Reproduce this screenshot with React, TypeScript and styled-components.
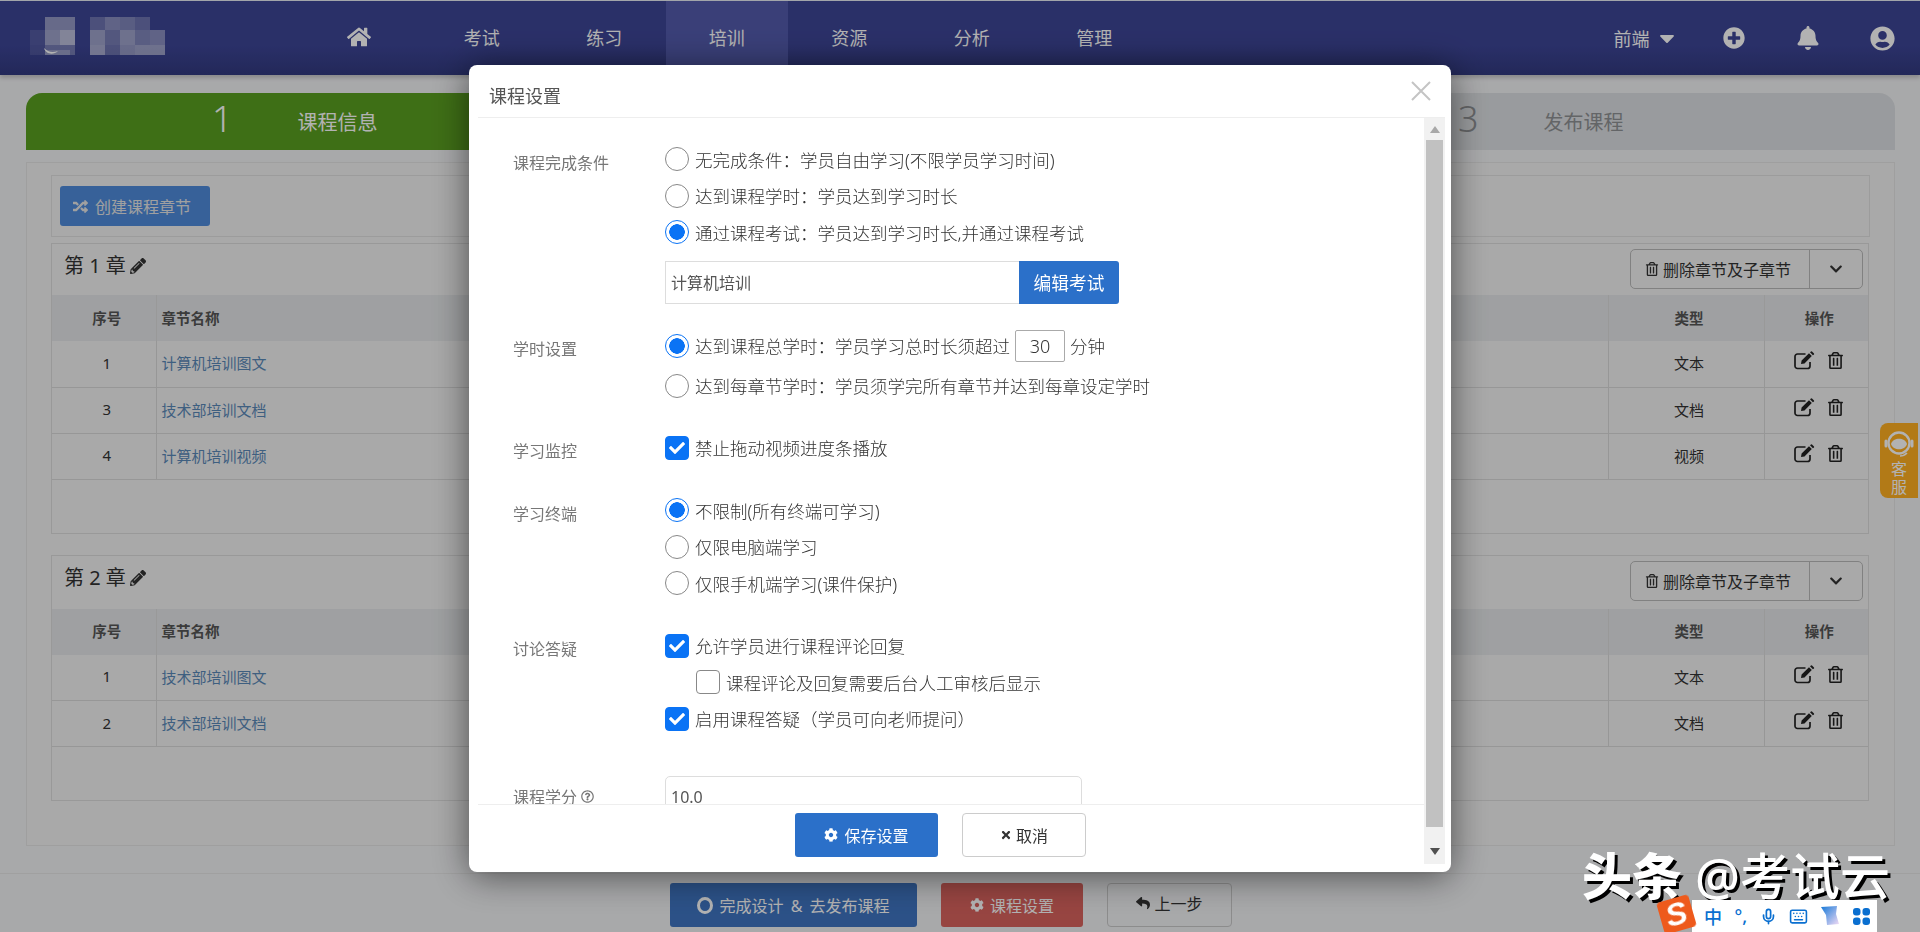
import React from 'react';
import styled, {createGlobalStyle} from "styled-components";
import {
    FaBell, FaCaretDown, FaCheck, FaChevronDown, FaCog, FaHome, FaPencilAlt, FaPlusCircle,
    FaRandom, FaRegQuestionCircle, FaRegTrashAlt, FaReply, FaTimes, FaUserCircle
} from "react-icons/fa";
import {Keyboard, Mic} from "lucide-react";

const GlobalStyle = createGlobalStyle`
    html, body {
        margin: 0;
        height: 932px;
        overflow: hidden;
        background: #f1f2f4;
        font-family: "Noto Sans", "Noto Sans CJK SC", sans-serif;
        color: #333;
    }
    * {
        box-sizing: border-box;
    }
`

const mosaic = [
    [15, 0, 30, 13, .45], [60, 0, 15, 13, .25], [75, 0, 15, 13, .4], [90, 0, 15, 13, .35], [105, 0, 15, 13, .25],
    [0, 13, 15, 15, .12], [15, 13, 15, 15, .5], [30, 13, 15, 15, .65], [60, 13, 15, 15, .5], [75, 13, 15, 15, .3], [90, 13, 15, 15, .5], [105, 13, 15, 15, .35], [120, 13, 15, 15, .4],
    [0, 28, 15, 10, .1], [15, 28, 30, 10, .3], [60, 28, 15, 10, .55], [75, 28, 15, 10, .25], [90, 28, 15, 10, .45], [105, 28, 30, 10, .5],
    [15, 33, 25, 5, .25], [60, 38, 75, 3, .05],
];

const Logo = () => (
    <svg width="135" height="38" viewBox="0 0 135 38" fill="none">
        {mosaic.map(([x, y, w, h, o], i) => (
            <rect key={i} x={x} y={y} width={w} height={h} fill="#fff" opacity={o}/>
        ))}
        <path d="M14 31 C16 38 24 38 28 34 C22 36 18 35 14 31Z" fill="#fff"/>
    </svg>
);

const EditIcon = () => (
    <svg width="21" height="19" viewBox="0 0 21 19" fill="none">
        <path d="M16 11 V15 A2.5 2.5 0 0 1 13.5 17.5 H3.5 A2.5 2.5 0 0 1 1 15 V5.500 A2.5 2.5 0 0 1 3.500 3 H11.500"
              stroke="currentColor" strokeWidth="1.7"/>
        <path d="M7 13 L7.600 9.500 L15 2.200 L17.800 5 L10.500 12.400Z M16 1.200 L17 .4 Q17.500 0 18 .4 L20 2.500 Q20.300 3 20 3.400 L18.900 4.200Z"
              fill="currentColor"/>
    </svg>
);

const navItems = ["考试", "练习", "培训", "资源", "分析", "管理"];

const Nav = () => (
    <NavBar>
        <LogoBox><Logo/></LogoBox>
        <NavItem><FaHome size={24}/></NavItem>
        {navItems.map(item => (
            <NavItem key={item} $active={item === "培训"}>{item}</NavItem>
        ))}
        <NavRight>
            <NavUser>前端<FaCaretDown size={24}/></NavUser>
            <NavIcon $gap={42.5}><FaPlusCircle size={22}/></NavIcon>
            <NavIcon><FaBell size={24}/></NavIcon>
            <NavIcon><FaUserCircle size={25}/></NavIcon>
        </NavRight>
    </NavBar>
);

const Steps = () => (
    <StepBar>
        <Step $bg="#5a9f20" $color="#fff"><StepNum>1</StepNum><StepText>课程信息</StepText><span/></Step>
        <Step $bg="#dcdfe2" $color="#8f9194"><StepNum>2</StepNum><StepText>课程内容</StepText><span/></Step>
        <Step $bg="#dcdfe2" $color="#8f9194"><StepNum>3</StepNum><StepText>发布课程</StepText><span/></Step>
    </StepBar>
);

type Row = { no: number; name: string; type: string };

const Chapter = ({no, rows, headH}: { no: number; rows: Row[]; headH: number }) => (
    <ChapterBox>
        <ChapterHead $h={headH}>
            <ChapterTitle>第 {no} 章<FaPencilAlt size={16}/></ChapterTitle>
            <DeleteGroup>
                <DeleteMain><FaRegTrashAlt size={14}/>删除章节及子章节</DeleteMain>
                <DeleteArrow><FaChevronDown size={14}/></DeleteArrow>
            </DeleteGroup>
        </ChapterHead>
        <Table>
            <colgroup>
                <col width="104"/>
                <col/>
                <col width="156"/>
                <col width="104"/>
            </colgroup>
            <thead>
            <tr>
                <HeadCell $center>序号</HeadCell>
                <HeadCell>章节名称</HeadCell>
                <HeadCell $center>类型</HeadCell>
                <HeadCell $center>操作</HeadCell>
            </tr>
            </thead>
            <tbody>
            {rows.map(r => (
                <tr key={r.no}>
                    <Cell $center>{r.no}</Cell>
                    <Cell><RowLink>{r.name}</RowLink></Cell>
                    <Cell $center>{r.type}</Cell>
                    <Cell $center>
                        <RowIcons><EditIcon/><FaRegTrashAlt size={17}/></RowIcons>
                    </Cell>
                </tr>
            ))}
            </tbody>
        </Table>
    </ChapterBox>
);

const Radio = ({checked, children}: { checked?: boolean; children: React.ReactNode }) => (
    <Line>
        <RadioMark $checked={checked}/>
        {children}
    </Line>
);

const Check = ({checked, indent, children}: { checked?: boolean; indent?: boolean; children: React.ReactNode }) => (
    <Line $indent={indent}>
        <CheckMark $checked={checked}>{checked && <FaCheck size={16}/>}</CheckMark>
        {children}
    </Line>
);

const SettingsDialog = () => (
    <Dialog>
        <DialogHead>
            <DialogTitle>课程设置</DialogTitle>
            <svg width="20" height="20" viewBox="0 0 20 20">
                <path d="M1 1 L19 19 M19 1 L1 19" stroke="#c4c4c4" strokeWidth="2"/>
            </svg>
        </DialogHead>
        <DialogMain>
            <DialogColumn>
                <DialogBody>
                    <Section $top={23}>
                        <SectionLabel>课程完成条件</SectionLabel>
                        <div>
                            <Radio>无完成条件：学员自由学习(不限学员学习时间)</Radio>
                            <Radio>达到课程学时：学员达到学习时长</Radio>
                            <Radio checked>通过课程考试：学员达到学习时长,并通过课程考试</Radio>
                            <ExamRow>
                                <ExamInput>计算机培训</ExamInput>
                                <ExamButton>编辑考试</ExamButton>
                            </ExamRow>
                        </div>
                    </Section>
                    <Section $top={24}>
                        <SectionLabel>学时设置</SectionLabel>
                        <div>
                            <Radio checked>达到课程总学时：学员学习总时长须超过<MinuteBox>30</MinuteBox>分钟</Radio>
                            <LineGap/>
                            <Radio>达到每章节学时：学员须学完所有章节并达到每章设定学时</Radio>
                        </div>
                    </Section>
                    <Section $top={25.5}>
                        <SectionLabel>学习监控</SectionLabel>
                        <div>
                            <Check checked>禁止拖动视频进度条播放</Check>
                        </div>
                    </Section>
                    <Section $top={26}>
                        <SectionLabel>学习终端</SectionLabel>
                        <div>
                            <Radio checked>不限制(所有终端可学习)</Radio>
                            <Radio>仅限电脑端学习</Radio>
                            <Radio>仅限手机端学习(课件保护)</Radio>
                        </div>
                    </Section>
                    <Section $top={26}>
                        <SectionLabel>讨论答疑</SectionLabel>
                        <div>
                            <Check checked>允许学员进行课程评论回复</Check>
                            <Check indent>课程评论及回复需要后台人工审核后显示</Check>
                            <Check checked>启用课程答疑（学员可向老师提问）</Check>
                        </div>
                    </Section>
                    <Section $top={38.5}>
                        <SectionLabel>课程学分 <FaRegQuestionCircle size={13}/></SectionLabel>
                        <CreditInput>10.0</CreditInput>
                    </Section>
                </DialogBody>
                <DialogFoot>
                    <FootButton $bg="#2b70c9" $color="#fff"><FaCog size={14}/>保存设置</FootButton>
                    <CancelButton><FaTimes size={12}/>取消</CancelButton>
                </DialogFoot>
            </DialogColumn>
            <Scrollbar>
                <ScrollArrow $up/>
                <ScrollThumb/>
                <ScrollRest><ScrollArrow/></ScrollRest>
            </Scrollbar>
        </DialogMain>
    </Dialog>
);

const InputBar = () => (
    <ImeBar>
        <ImeLogo><span>S</span></ImeLogo>
        <ImeText>中</ImeText>
        <ImeText>°,</ImeText>
        <Mic size={17} strokeWidth={2.4}/>
        <Keyboard size={19} strokeWidth={2}/>
        <svg width="20" height="24" viewBox="0 0 20 24">
            <defs>
                <linearGradient id="imeSkin" x1="0" y1="0" x2="1" y2="1">
                    <stop offset="0" stopColor="#1478d8"/>
                    <stop offset="1" stopColor="#f4dcf5"/>
                </linearGradient>
            </defs>
            <path d="M1 3 L17 2 L16 10 L19 20 L7 21 L6 11Z" fill="url(#imeSkin)"/>
        </svg>
        <svg width="17" height="17" viewBox="0 0 17 17" fill="#0a6fd0">
            <rect x="0" y="0" width="7.5" height="7.5" rx="3"/>
            <rect x="9.5" y="0" width="7.5" height="7.5" rx="3"/>
            <rect x="0" y="9.5" width="7.5" height="7.5" rx="3"/>
            <rect x="9.5" y="9.5" width="7.5" height="7.5" rx="3"/>
        </svg>
    </ImeBar>
);

export default function App() {
    return (
        <>
            <GlobalStyle/>
            <Page>
                <Nav/>
                <Steps/>
                <Panel>
                    <Toolbar><CreateButton><FaRandom size={15}/>创建课程章节</CreateButton></Toolbar>
                    <Chapter no={1} headH={51} rows={[
                        {no: 1, name: "计算机培训图文", type: "文本"},
                        {no: 3, name: "技术部培训文档", type: "文档"},
                        {no: 4, name: "计算机培训视频", type: "视频"},
                    ]}/>
                    <ChapterGap/>
                    <Chapter no={2} headH={53} rows={[
                        {no: 1, name: "技术部培训图文", type: "文本"},
                        {no: 2, name: "技术部培训文档", type: "文档"},
                    ]}/>
                </Panel>
                <BottomBar>
                    <FootButton $bg="#3f75c2" $color="#fff" $w={247}><RingIcon/>完成设计 &amp; 去发布课程</FootButton>
                    <FootButton $bg="#d9635e" $color="#fff" $w={142}><FaCog size={14}/>课程设置</FootButton>
                    <BackButton><FaReply size={14}/>上一步</BackButton>
                </BottomBar>
                <ServiceTab>
                    <svg width="32" height="32" viewBox="0 0 32 32" fill="none">
                        <circle cx="16" cy="15" r="10.5" stroke="#fff" strokeWidth="2.4"/>
                        <path d="M8 16 C10 9 22 9 24 16 C22 23 10 23 8 16Z" fill="#fff"/>
                        <path d="M3 13 V18 M29 13 V18" stroke="#fff" strokeWidth="3" strokeLinecap="round"/>
                        <path d="M24 25 C22 27 20 28 17 28" stroke="#fff" strokeWidth="1.6"/>
                    </svg>
                    <span>客</span>
                    <span>服</span>
                </ServiceTab>
            </Page>
            <Backdrop/>
            <SettingsDialog/>
            <Watermark><b>头条</b> @考试云</Watermark>
            <InputBar/>
        </>
    );
}

const Page = styled.div`
    position: relative;
    height: 932px;
    overflow: hidden;
`
const Backdrop = styled.div`
    position: fixed;
    inset: 0;
    z-index: 10;
    background: rgba(0, 0, 0, .3);
`
const NavBar = styled.nav`
    display: flex;
    align-items: stretch;
    height: 75px;
    border-top: 1px solid #e8ecf4;
    background: linear-gradient(#3d4596 60%, #323a80);
    box-shadow: 0 3px 4px rgba(0, 0, 0, .18);
`
const LogoBox = styled.div`
    width: 298px;
    padding: 16px 0 0 30px;
`
const NavItem = styled.a<{ $active?: boolean }>`
    display: flex;
    align-items: center;
    justify-content: center;
    width: 122.5px;
    padding-bottom: 2px;
    font-size: 18px;
    color: #fff;
    background: ${props => props.$active ? "#535bad" : "transparent"};
`
const NavRight = styled.div`
    display: flex;
    align-items: center;
    margin-left: auto;
    padding-right: 25px;
    color: #fff;
`
const NavUser = styled.span`
    display: flex;
    align-items: center;
    gap: 5px;
    font-size: 18px;
`
const NavIcon = styled.span<{ $gap?: number }>`
    display: flex;
    justify-content: center;
    width: 25px;
    margin-left: ${props => props.$gap ?? 49.5}px;
`
const StepBar = styled.div`
    display: flex;
    height: 57px;
    margin: 18px 25px 0 26px;
    border-radius: 16px 16px 0 0;
    overflow: hidden;
`
const Step = styled.div<{ $bg: string; $color: string }>`
    display: grid;
    flex: 1;
    grid-template-columns: 1fr auto 1fr;
    align-items: center;
    background: ${props => props.$bg};
    color: ${props => props.$color};
`
const StepNum = styled.span`
    justify-self: end;
    margin: 0 65px 6px 0;
    font-size: 36px;
    font-weight: 300;
`
const StepText = styled.span`
    font-size: 20px;
`
const Panel = styled.div`
    margin: 12px 25px 0 26px;
    height: 684px;
    padding: 12px 24px 0;
    border: 1px solid #e4e4e4;
    background: #f2f2f2;
`
const Toolbar = styled.div`
    height: 62px;
    padding: 10px 8px;
    border: 1px solid #e0e0e0;
`
const CreateButton = styled.button`
    display: flex;
    align-items: center;
    gap: 7px;
    height: 40px;
    width: 150px;
    padding: 0 0 0 13px;
    border: 0;
    border-radius: 3px;
    background: #4f8cdc;
    color: #e6e6e6;
    font: 16px "Noto Sans", "Noto Sans CJK SC", sans-serif;
`
const ChapterBox = styled.section`
    margin-top: 6px;
    width: 1818px;
    padding-bottom: 53px;
    border: 1px solid #dcdcdc;
`
const ChapterGap = styled.div`
    height: 15px;
`
const ChapterHead = styled.header<{ $h: number }>`
    display: flex;
    align-items: flex-start;
    justify-content: space-between;
    height: ${props => props.$h}px;
    padding: 5px 5px 0 12px;
`
const ChapterTitle = styled.h3`
    display: flex;
    align-items: center;
    gap: 4px;
    margin: 0;
    font-size: 20px;
    font-weight: 400;
    line-height: 34px;
`
const DeleteGroup = styled.div`
    display: flex;
    height: 40px;
    border: 1px solid #b9b9b9;
    border-radius: 5px;
`
const DeleteMain = styled.span`
    display: flex;
    align-items: center;
    gap: 4px;
    width: 179px;
    padding-left: 14px;
    font-size: 16px;
    white-space: nowrap;
    border-right: 1px solid #b9b9b9;
`
const DeleteArrow = styled.span`
    display: flex;
    align-items: center;
    justify-content: center;
    width: 52px;
`
const Table = styled.table`
    width: 100%;
    table-layout: fixed;
    border-collapse: collapse;
`
const HeadCell = styled.th<{ $center?: boolean }>`
    height: 46px;
    padding: 0 0 2px ${props => props.$center ? 6 : 5}px;
    border-left: 1px solid #dcdcdc;
    background: #e4e6e8;
    font-size: 14.5px;
    font-weight: 700;
    color: #555;
    text-align: ${props => props.$center ? "center" : "left"};

    &:first-child {
        border-left: 0;
    }
`
const Cell = styled.td<{ $center?: boolean }>`
    height: 46px;
    padding: 0 0 2px ${props => props.$center ? 6 : 5}px;
    border-left: 1px solid #d8d8d8;
    border-bottom: 1px solid #d8d8d8;
    font-size: 15px;
    text-align: ${props => props.$center ? "center" : "left"};

    &:first-child {
        border-left: 0;
    }
`
const RowLink = styled.a`
    color: #5a88b8;
`
const RowIcons = styled.span`
    display: inline-flex;
    align-items: center;
    gap: 12px;
    margin-bottom: 4px;
    color: #222;
    vertical-align: middle;
`
const BottomBar = styled.footer`
    display: flex;
    justify-content: center;
    gap: 24px;
    height: 59px;
    margin-top: 27px;
    padding: 9px 18px 0 0;
    border-top: 1px solid #e6e6e6;
`
const FootButton = styled.button<{ $bg: string; $color: string; $w?: number }>`
    display: flex;
    align-items: center;
    justify-content: center;
    gap: 6px;
    width: ${props => props.$w ?? 143}px;
    height: 44px;
    padding: 0;
    border: 0;
    border-radius: 3px;
    background: ${props => props.$bg};
    color: ${props => props.$color};
    font: 16px "Noto Sans", "Noto Sans CJK SC", sans-serif;
    word-spacing: 3px;
`
const CancelButton = styled.button`
    display: flex;
    align-items: center;
    justify-content: center;
    gap: 4px;
    width: 124px;
    height: 44px;
    padding: 0;
    border: 1px solid #ccc;
    border-radius: 4px;
    background: #fff;
    color: #333;
    font: 16px "Noto Sans", "Noto Sans CJK SC", sans-serif;
`
const BackButton = styled(CancelButton)`
    width: 125px;
    border-color: #c9c9c9;
    background: transparent;
    padding-bottom: 5px;
`
const RingIcon = styled.span`
    width: 16px;
    height: 17px;
    border: 3px solid #fff;
    border-radius: 50%;
`
const ServiceTab = styled.aside`
    position: absolute;
    top: 423px;
    right: 2px;
    display: flex;
    flex-direction: column;
    align-items: center;
    width: 38px;
    height: 75px;
    padding-top: 5px;
    border-radius: 8px 0 0 8px;
    background: #ffaf22;
    color: #fff;
    font-size: 16px;
    line-height: 18px;
`
const Dialog = styled.div`
    position: fixed;
    top: 65px;
    left: 469px;
    z-index: 11;
    width: 982px;
    height: 807px;
    padding: 0 6px 0 9px;
    border-radius: 8px;
    background: #fff;
    box-shadow: 0 4px 36px rgba(0, 0, 0, .55);
`
const DialogHead = styled.header`
    display: flex;
    align-items: center;
    justify-content: space-between;
    height: 53px;
    padding: 0 14px 0 11px;
    border-bottom: 1px solid #eee;
`
const DialogTitle = styled.h4`
    margin: 8px 0 0;
    font-size: 18px;
    font-weight: 400;
    color: #555;
`
const DialogMain = styled.div`
    display: flex;
    height: 746px;
`
const DialogColumn = styled.div`
    display: flex;
    flex: 1;
    flex-direction: column;
    height: 754px;
    min-width: 0;
`
const DialogBody = styled.div`
    height: 686px;
    padding-left: 35px;
    overflow: hidden;
`
const Section = styled.div<{ $top: number }>`
    display: grid;
    grid-template-columns: 152px 1fr;
    margin-top: ${props => props.$top}px;
`
const SectionLabel = styled.label`
    display: flex;
    align-items: center;
    gap: 4px;
    align-self: start;
    height: 36.5px;
    margin: 2.5px 0 -2.5px;
    font-size: 16px;
    color: #777;
`
const Line = styled.div<{ $indent?: boolean }>`
    display: flex;
    align-items: center;
    height: 36.5px;
    padding-left: ${props => props.$indent ? 31 : 0}px;
    font-size: 17.5px;
    font-weight: 300;
    color: #333;
`
const LineGap = styled.div`
    height: 3.5px;
`
const RadioMark = styled.span<{ $checked?: boolean }>`
    flex: none;
    width: 24px;
    height: 24px;
    margin-right: 6px;
    border: 1.5px solid ${props => props.$checked ? "#0a73f5" : "#888"};
    border-radius: 50%;
    background: ${props => props.$checked ? "radial-gradient(circle, #0a73f5 0 7.5px, #fff 8px)" : "#fff"};
`
const CheckMark = styled.span<{ $checked?: boolean }>`
    display: flex;
    flex: none;
    align-items: center;
    justify-content: center;
    width: 24px;
    height: 24px;
    margin-right: 6px;
    border: 1.5px solid ${props => props.$checked ? "#0a73f5" : "#888"};
    border-radius: 4px;
    background: ${props => props.$checked ? "#0a73f5" : "#fff"};
    color: #fff;
`
const ExamRow = styled.div`
    display: flex;
    margin-top: 10px;
    height: 43px;
`
const ExamInput = styled.div`
    display: flex;
    align-items: center;
    width: 354px;
    padding-left: 5px;
    border: 1px solid #ddd;
    border-right: 0;
    font-size: 16px;
    color: #555;
`
const ExamButton = styled.button`
    width: 100px;
    border: 0;
    border-radius: 0 3px 3px 0;
    background: #2b70c9;
    color: #fff;
    font: 17.7px "Noto Sans", "Noto Sans CJK SC", sans-serif;
`
const MinuteBox = styled.span`
    display: flex;
    align-items: center;
    justify-content: center;
    width: 50px;
    height: 32px;
    margin: 0 5px;
    border: 1px solid #aaa;
    border-radius: 2px;
    font-size: 18px;
`
const CreditInput = styled.div`
    width: 417px;
    height: 44px;
    padding: 9px 5px;
    border: 1px solid #ddd;
    border-radius: 5px;
    font-size: 16px;
    color: #555;
`
const DialogFoot = styled.footer`
    display: flex;
    justify-content: center;
    gap: 24px;
    height: 68px;
    padding: 8px 21px 0 0;
    border-top: 1px solid #eee;
`
const Scrollbar = styled.div`
    display: flex;
    flex-direction: column;
    flex: none;
    width: 21px;
    height: 746px;
    background: #f1f1f1;
`
const ScrollArrow = styled.span<{ $up?: boolean }>`
    display: flex;
    align-items: center;
    justify-content: center;
    height: 22px;

    &::before {
        content: "";
        border-left: 5px solid transparent;
        border-right: 5px solid transparent;
        ${props => props.$up ? "border-bottom: 7px solid #a8a8a8;" : "border-top: 7px solid #505050;"}
    }
`
const ScrollThumb = styled.div`
    width: 17px;
    height: 687px;
    margin-left: 2px;
    background: #c1c1c1;
`
const ScrollRest = styled.div`
    display: flex;
    flex: 1;
    flex-direction: column;
    justify-content: flex-end;
    padding-bottom: 2px;
`
const Watermark = styled.div`
    position: fixed;
    right: 30px;
    top: 847px;
    z-index: 12;
    font-size: 50px;
    line-height: 58px;
    font-weight: 500;
    color: #fff;
    white-space: nowrap;
    text-shadow: 3px 3px 0 #000;

    b {
        font-weight: 900;
    }
`
const ImeBar = styled.div`
    position: fixed;
    left: 1692px;
    top: 900px;
    z-index: 13;
    display: flex;
    align-items: center;
    justify-content: space-between;
    width: 185px;
    height: 32px;
    padding: 0 7px 0 12px;
    background: #fff;
    color: #0a6fd0;
`
const ImeLogo = styled.span`
    position: absolute;
    left: -32px;
    top: -2px;
    display: flex;
    align-items: center;
    justify-content: center;
    width: 33px;
    height: 33px;
    border-radius: 4px;
    background: #ee5a1c;
    transform: rotate(-16deg);
    color: #fff;
    font: italic 900 32px "Liberation Sans", sans-serif;
`
const ImeText = styled.span`
    font-size: 18px;
    font-weight: 500;
`
